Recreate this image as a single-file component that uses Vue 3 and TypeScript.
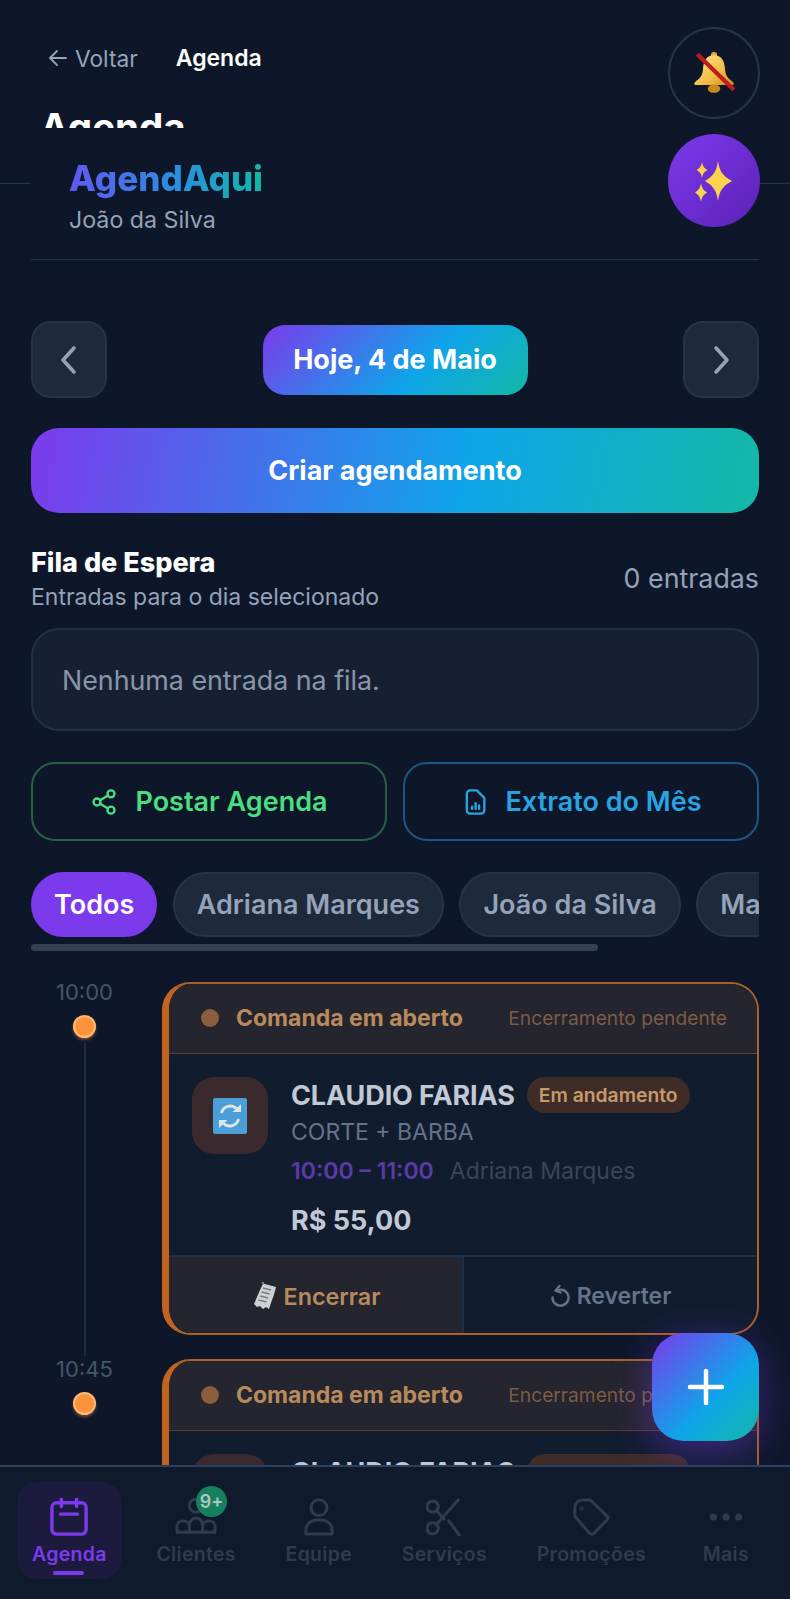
<script setup lang="ts">
import { ref } from 'vue';

interface Appointment {
  time: string;
  client: string;
  service: string;
  range: string;
  barber: string;
  price: string;
}

interface NavItem {
  label: string;
  icon: string;
  badge?: string;
}

const barbers = ref<string[]>(['Todos', 'Adriana Marques', 'João da Silva', 'Marcos Lima']);

const appointments = ref<Appointment[]>([
  { time: '10:00', client: 'CLAUDIO FARIAS', service: 'CORTE + BARBA', range: '10:00 – 11:00', barber: 'Adriana Marques', price: 'R$ 55,00' },
  { time: '10:45', client: 'CLAUDIO FARIAS', service: 'CORTE + BARBA', range: '10:45 – 11:45', barber: 'Adriana Marques', price: 'R$ 55,00' },
]);

const navItems = ref<NavItem[]>([
  { label: 'Agenda', icon: 'calendar' },
  { label: 'Clientes', icon: 'clients', badge: '9+' },
  { label: 'Equipe', icon: 'user' },
  { label: 'Serviços', icon: 'scissors' },
  { label: 'Promoções', icon: 'tag' },
  { label: 'Mais', icon: 'dots' },
]);
</script>

<template>
  <div class="page">

    <div class="crumbs">
      <div class="crumb-row">
        <span class="back">
          <svg width="22" height="22" viewBox="0 0 22 22" fill="none" stroke="currentColor" stroke-width="1.8" stroke-linecap="round" stroke-linejoin="round"><path d="M19 11H3M10 4l-7 7 7 7" /></svg>
          Voltar
        </span>
        <span class="crumb-current">Agenda</span>
      </div>
      <h1 class="page-title">Agenda</h1>
    </div>

    <div class="content">

      <!-- Brand -->
      <div class="brand">
        <div class="brand-name">AgendAqui</div>
        <div class="brand-user">João da Silva</div>
      </div>

      <!-- Date switcher -->
      <div class="date-row">
        <button class="date-arrow">
          <svg width="24" height="32" viewBox="0 0 24 32" fill="none" stroke="currentColor" stroke-width="3.6" stroke-linecap="round" stroke-linejoin="round"><path d="M17 4 6 16l11 12" /></svg>
        </button>
        <div class="date-pill">Hoje, 4 de Maio</div>
        <button class="date-arrow">
          <svg width="24" height="32" viewBox="0 0 24 32" fill="none" stroke="currentColor" stroke-width="3.6" stroke-linecap="round" stroke-linejoin="round"><path d="m7 4 11 12L7 28" /></svg>
        </button>
      </div>

      <button class="btn-create">Criar agendamento</button>

      <!-- Waiting list -->
      <div class="queue-head">
        <div>
          <div class="queue-title">Fila de Espera</div>
          <div class="queue-sub">Entradas para o dia selecionado</div>
        </div>
        <div class="queue-count">0 entradas</div>
      </div>
      <div class="queue-box">Nenhuma entrada na fila.</div>

      <!-- Actions -->
      <div class="action-row">
        <button class="btn-outline btn-green">
          <svg width="28" height="28" viewBox="0 0 24 24" fill="none" stroke="currentColor" stroke-width="2" stroke-linecap="round" stroke-linejoin="round">
            <circle cx="18" cy="5" r="3" /><circle cx="6" cy="12" r="3" /><circle cx="18" cy="19" r="3" />
            <path d="m8.6 13.5 6.8 4M15.4 6.5l-6.8 4" />
          </svg>
          Postar Agenda
        </button>
        <button class="btn-outline btn-blue">
          <svg width="28" height="28" viewBox="0 0 24 24" fill="none" stroke="currentColor" stroke-width="2" stroke-linecap="round" stroke-linejoin="round">
            <path d="M8 2h5.500L20 8.500V19a3 3 0 0 1-3 3H8a3 3 0 0 1-3-3V5a3 3 0 0 1 3-3Z" />
            <path d="M9.500 18v-2M12.500 18v-5M15.500 18v-3" />
          </svg>
          Extrato do Mês
        </button>
      </div>

      <!-- Barber filter -->
      <div class="tabs">
        <span v-for="(name, i) in barbers" :key="name" class="tab" :class="{ 'tab-active': i === 0 }">{{ name }}</span>
      </div>
      <div class="tabs-scroll"><div class="tabs-thumb"></div></div>

      <!-- Timeline -->
      <div class="timeline">
        <div v-for="(item, i) in appointments" :key="item.time" class="slot">
          <div class="slot-time">
            <span class="time-label">{{ item.time }}</span>
            <span class="time-dot"></span>
            <span v-if="i < appointments.length - 1" class="time-line"></span>
          </div>

          <div class="card">
            <div class="card-head">
              <span class="head-dot"></span>
              <span class="head-title">Comanda em aberto</span>
              <span class="head-note">Encerramento pendente</span>
            </div>

            <div class="card-body">
              <div class="avatar">
                <svg width="36" height="36" viewBox="0 0 36 36">
                  <rect x="1" y="0" width="34" height="36" rx="2" fill="#4a9fd8" />
                  <path d="M9.500 15a9 9 0 0 1 15-4.500M26.500 21a9 9 0 0 1-15 4.500" fill="none" stroke="#dfe6ea" stroke-width="3" />
                  <path d="M20.500 14H29V6ZM15.500 22H7v8Z" fill="#dfe6ea" />
                </svg>
              </div>
              <div class="info">
                <div class="name-row">
                  <span class="client">{{ item.client }}</span>
                  <span class="status">Em andamento</span>
                </div>
                <div class="service">{{ item.service }}</div>
                <div class="meta">
                  <span class="range">{{ item.range }}</span>
                  <span class="barber">{{ item.barber }}</span>
                </div>
                <div class="price">{{ item.price }}</div>
              </div>
            </div>

            <div class="card-actions">
              <button class="card-btn card-btn-close">
                <svg width="26" height="28" viewBox="0 0 26 28">
                  <path d="M10 1 25 5c-1 4-2 8-4 13-1 3-2 6-3 9l-3-2-3 2-3-3-3 1-3-3c3-6 5-13 10-22Z" fill="#cfd2d2" />
                  <path d="M12 6l8 2M10.500 10l8 2M9 14l8 2M7.500 18l8 2" stroke="#777d80" stroke-width="1.500" />
                </svg>
                Encerrar
              </button>
              <button class="card-btn card-btn-revert">
                <svg width="20" height="24" viewBox="0 0 20 24" fill="none" stroke="currentColor" stroke-width="2.400" stroke-linecap="round" stroke-linejoin="round">
                  <path d="M6 7a8 8 0 1 1-3.500 6.500" /><path d="M9.500 2 5.500 6.500l5 2" />
                </svg>
                Reverter
              </button>
            </div>
          </div>
        </div>
      </div>
    </div>

    <!-- Floating buttons -->
    <button class="float-round float-bell">
      <svg width="46" height="46" viewBox="0 0 44 44">
        <defs>
          <linearGradient id="bellGold" x1="0" y1="0" x2="1" y2="1">
            <stop offset="0" stop-color="#ffe58a" />
            <stop offset="0.6" stop-color="#f1bd45" />
            <stop offset="1" stop-color="#c98a1c" />
          </linearGradient>
        </defs>
        <circle cx="22" cy="5" r="3" fill="#e0ac3e" />
        <path d="M22 5c7 0 10 5 10.500 13 .4 7 3 9 8 13 .8 1 .3 2.500-1 2.500H4.500c-1.300 0-1.800-1.500-1-2.500 5-4 7.600-6 8-13C12 10 15 5 22 5Z" fill="url(#bellGold)" />
        <ellipse cx="22" cy="37" rx="6" ry="4" fill="#c98a1c" />
        <path d="M6 4 41 38" stroke="#c01c1c" stroke-width="4" />
      </svg>
    </button>
    <button class="float-round float-spark">
      <svg width="40" height="44" viewBox="0 0 40 44" fill="#fcd34d">
        <path d="M24 2c1.500 10 4.500 15 14 20-9.500 5-12.500 10-14 20-1.500-10-4.500-15-13-20 8.500-5 11.500-10 13-20Z" />
        <path d="M8 3c.7 4 2 6 5.500 8C10 13 8.700 15 8 19c-.7-4-2-6-5.500-8C6 9 7.300 7 8 3Z" />
        <path d="M7 24c.8 5 2.300 7 6 9.500-3.700 2.500-5.200 4.500-6 9.500-.8-5-2.300-7-6-9.500 3.700-2.500 5.200-4.500 6-9.500Z" />
      </svg>
    </button>
    <button class="fab">
      <svg width="40" height="40" viewBox="0 0 40 40" stroke="#fff" stroke-width="4.500" stroke-linecap="round"><path d="M20 4v32M4 20h32" /></svg>
    </button>

    <!-- Bottom navigation -->
    <nav class="nav">
      <div v-for="(item, i) in navItems" :key="item.label" class="nav-item" :class="{ 'nav-active': i === 0 }">
        <span class="nav-icon">
          <svg v-if="item.icon === 'calendar'" width="38" height="38" viewBox="0 0 40 40" fill="none" stroke="currentColor" stroke-width="3.600" stroke-linecap="round" stroke-linejoin="round">
            <rect x="2" y="5" width="36" height="33" rx="5" />
            <path d="M12 1v8M28 1v8M11 17h18" />
          </svg>
          <svg v-else-if="item.icon === 'clients'" width="42" height="38" viewBox="0 0 44 40" fill="none" stroke="currentColor" stroke-width="3" stroke-linecap="round" stroke-linejoin="round">
            <circle cx="22" cy="8" r="7" />
            <path d="M2 36v-6c0-4 3-6 6-6s6 2 7 4c1-5 4-7 7-7s6 2 7 7c1-2 4-4 7-4s6 2 6 6v6ZM15 28v8M29 28v8" />
          </svg>
          <svg v-else-if="item.icon === 'user'" width="30" height="38" viewBox="0 0 32 40" fill="none" stroke="currentColor" stroke-width="3.200" stroke-linecap="round" stroke-linejoin="round">
            <circle cx="16" cy="10" r="8.500" />
            <path d="M2 38v-4c0-7 6-11 14-11s14 4 14 11v4Z" />
          </svg>
          <svg v-else-if="item.icon === 'scissors'" width="36" height="38" viewBox="0 0 38 40" fill="none" stroke="currentColor" stroke-width="3.200" stroke-linecap="round" stroke-linejoin="round">
            <circle cx="7" cy="9" r="6" /><circle cx="7" cy="32" r="6" />
            <path d="M34 2 11 28M11 13l8 9M24 24l11 15" />
          </svg>
          <svg v-else-if="item.icon === 'tag'" width="38" height="38" viewBox="0 0 40 40" fill="none" stroke="currentColor" stroke-width="3.200" stroke-linecap="round" stroke-linejoin="round">
            <path d="M11 2h7a3 3 0 0 1 2.500 1.200L37 19a3 3 0 0 1 0 4L23 37a3 3 0 0 1-4.500 0L3.500 20A3 3 0 0 1 3 18v-8a8 8 0 0 1 8-8Z" />
            <circle cx="10" cy="11" r=".6" />
          </svg>
          <svg v-else width="36" height="10" viewBox="0 0 40 10" fill="currentColor">
            <circle cx="6" cy="5" r="4" /><circle cx="20" cy="5" r="4" /><circle cx="34" cy="5" r="4" />
          </svg>
          <span v-if="item.badge" class="nav-badge">{{ item.badge }}</span>
        </span>
        <span class="nav-label">{{ item.label }}</span>
        <span v-if="i === 0" class="nav-mark"></span>
      </div>
    </nav>

  </div>
</template>

<style>
html, body { margin: 0; background: #0e172a; }
</style>

<style scoped>
.page {
  position: relative;
  width: 790px;
  height: 1599px;
  overflow: hidden;
  background: #0e172a;
  font-family: Inter, "Liberation Sans", sans-serif;
  color: #fff;
}
button { font-family: inherit; cursor: pointer; padding: 0; }

.crumbs { height: 184px; box-sizing: border-box; padding: 40px 31px 0 47px; border-bottom: 1px solid #22344f; }
.crumb-row { display: flex; align-items: center; gap: 38px; height: 36px; font-size: 22.700px; }
.back { display: flex; align-items: center; gap: 6px; color: #94a3b8; }
.crumb-current { color: #fff; font-weight: 600; font-size: 23px; }
.page-title { margin: 28px 0 0 -7px; font-size: 38.500px; line-height: 46px; font-weight: 700; }

.content { padding: 0 31px; margin-top: -56px; position: relative; }

.brand { height: 132px; box-sizing: border-box; background: #0e172a; border-bottom: 1px solid #22344f; padding: 27px 0 0 38px; }
.brand-name {
  font-size: 35px;
  line-height: 46px;
  font-weight: 800;
  width: 196px;
  background: linear-gradient(90deg, #6456f0, #2a8fe0 55%, #14b8a6);
  -webkit-background-clip: text;
  background-clip: text;
  color: transparent;
}
.brand-user { font-size: 23.200px; line-height: 34px; color: #94a3b8; margin-top: 2px; }

.date-row { display: flex; align-items: center; justify-content: space-between; margin-top: 61px; }
.date-arrow {
  width: 76px;
  height: 77px;
  border: 2px solid #25344c;
  border-radius: 20px;
  background: #1e293b;
  color: #94a3b8;
  display: flex;
  align-items: center;
  justify-content: center;
}
.date-pill {
  width: 265px;
  height: 70px;
  border-radius: 22px;
  background: linear-gradient(135deg, #7c3aed, #0ea5e9 60%, #14b8a6);
  display: flex;
  align-items: center;
  justify-content: center;
  font-size: 27px;
  font-weight: 700;
}

.btn-create {
  display: block;
  width: 100%;
  height: 85px;
  margin-top: 30px;
  border: none;
  border-radius: 28px;
  background: linear-gradient(100deg, #7c3aed, #0ea5e9 60%, #14b8a6);
  color: #fff;
  font-size: 27px;
  font-weight: 700;
}

.queue-head { display: flex; justify-content: space-between; align-items: center; margin-top: 34px; }
.queue-title { font-size: 27px; line-height: 32px; font-weight: 800; }
.queue-sub { font-size: 23px; line-height: 34px; color: #94a3b8; margin-top: 1px; }
.queue-count { font-size: 26.800px; color: #94a3b8; margin-bottom: 5px; }

.queue-box {
  height: 103px;
  box-sizing: border-box;
  margin-top: 14px;
  padding-left: 29px;
  display: flex;
  align-items: center;
  border: 2px solid #22314a;
  border-radius: 28px;
  background: #172033;
  font-size: 26.800px;
  color: #8a96a8;
}

.action-row { display: grid; grid-template-columns: 1fr 1fr; gap: 16px; margin-top: 31px; }
.btn-outline {
  height: 79px;
  border-radius: 24px;
  background: transparent;
  display: flex;
  align-items: center;
  justify-content: center;
  gap: 17px;
  font-size: 27px;
  font-weight: 600;
}
.btn-green { border: 2px solid #266148; color: #4ade80; }
.btn-blue { border: 2px solid #1d5680; color: #29a3e2; }

.tabs { display: flex; gap: 15.500px; margin-top: 31px; overflow: hidden; }
.tab {
  flex-shrink: 0;
  height: 65px;
  box-sizing: border-box;
  padding: 0 22px;
  display: flex;
  align-items: center;
  border: 2px solid #25344c;
  border-radius: 33px;
  background: #1e293b;
  color: #94a3b8;
  font-size: 27px;
  font-weight: 600;
}
.tab-active { padding: 0 21px; background: #7c3aed; border-color: #7c3aed; color: #fff; }

.tabs-scroll { margin-top: 7px; height: 7px; }
.tabs-thumb { width: 567px; height: 7px; border-radius: 4px; background: #334155; }

/* cut where the bottom nav starts */
.timeline { display: flex; flex-direction: column; gap: 24px; margin-top: 28px; padding-top: 3px; height: 486px; box-sizing: border-box; overflow: hidden; }
.slot { display: flex; gap: 24px; flex-shrink: 0; }
.slot-time { width: 107px; flex-shrink: 0; display: flex; flex-direction: column; align-items: center; }
.time-label { font-size: 22px; line-height: 26px; margin-top: -3px; color: #475569; }
.time-dot {
  width: 23px;
  height: 23px;
  box-sizing: border-box;
  margin-top: 10px;
  border-radius: 50%;
  background: #fb923c;
  border: 2px solid #fdba74;
  box-shadow: 0 2px 3px rgba(251, 146, 60, 0.4);
}
.time-line { flex: 1; width: 2px; margin-top: 5px; margin-bottom: -21px; background: #1f2c41; }

.card {
  flex: 1;
  overflow: hidden;
  box-sizing: border-box;
  height: 353px;
  border: 2px solid #ab6029;
  border-left: 7px solid #c2641f;
  border-radius: 28px;
  background: #111c2f;
}
.card-head {
  height: 70px;
  box-sizing: border-box;
  display: flex;
  align-items: center;
  padding: 0 30px 2px 32px;
  background: #25252f;
  border-bottom: 1px solid #5e3d2c;
}
.head-dot { width: 18px; height: 18px; border-radius: 50%; background: #8a5d3c; margin-right: 17px; }
.head-title { font-size: 23px; font-weight: 700; color: #b98a5c; }
.head-note { margin-left: auto; font-size: 19.200px; color: #7d5c45; }

.card-body { display: flex; gap: 23px; height: 201px; box-sizing: border-box; padding: 23px 0 0 23px; }
.avatar {
  width: 76px;
  height: 77px;
  flex-shrink: 0;
  display: flex;
  align-items: center;
  justify-content: center;
  border-radius: 22px;
  background: #3a2a2d;
}
.name-row { display: flex; align-items: center; gap: 12px; height: 36px; }
.client { font-size: 27px; font-weight: 700; letter-spacing: -0.100px; color: #c2c9d5; }
.status { height: 36px; padding: 0 12px; display: flex; align-items: center; border-radius: 18px; background: #3f2c27; color: #c79a6b; font-size: 19.300px; font-weight: 600; }
.service { font-size: 23px; line-height: 32px; margin-top: 3px; color: #64748b; }
.meta { display: flex; gap: 16px; font-size: 23px; line-height: 32px; margin-top: 7px; }
.range { color: #5b3aa8; font-weight: 600; }
.barber { color: #3a4659; }
.price { font-size: 27px; font-weight: 700; line-height: 32px; margin-top: 18px; color: #c2c9d5; }

.card-actions { display: flex; height: 80px; border-top: 2px solid #1e3048; }
.card-btn {
  flex: 1;
  border: none;
  padding-bottom: 2px;
  display: flex;
  align-items: center;
  justify-content: center;
  gap: 7px;
  font-size: 23.300px;
  font-weight: 600;
  background: transparent;
}
.card-btn-close { background: #25252f; color: #b98a5c; border-right: 2px solid #1e3048; }
.card-btn-revert { color: #64748b; font-size: 23px; }

.float-round {
  position: absolute;
  left: 668px;
  width: 92px;
  height: 92px;
  border-radius: 50%;
  display: flex;
  align-items: center;
  justify-content: center;
}
.float-bell { top: 27px; background: #0e172a; border: 2px solid #25344c; }
.float-spark { top: 134px; height: 93px; border: none; background: linear-gradient(135deg, #7c3aed, #5b21b6); }

.fab {
  position: absolute;
  left: 652px;
  top: 1333px;
  width: 107px;
  height: 108px;
  border: none;
  border-radius: 32px;
  background: linear-gradient(135deg, #7c3aed, #0ea5e9 60%, #14b8a6);
  box-shadow: 0 10px 40px rgba(124, 58, 237, 0.45);
  display: flex;
  align-items: center;
  justify-content: center;
}

.nav {
  position: absolute;
  left: 0;
  right: 0;
  bottom: 0;
  height: 134px;
  box-sizing: border-box;
  padding: 15px 26px 0 17px;
  display: flex;
  justify-content: space-between;
  align-items: flex-start;
  background: #0f1a2c;
  border-top: 2px solid #2b4160;
  color: #2f3c50;
}
.nav-item {
  position: relative;
  height: 97px;
  box-sizing: border-box;
  padding: 16px 15px 0;
  display: flex;
  flex-direction: column;
  align-items: center;
  border-radius: 20px;
}
.nav-item:last-child { margin-left: 7px; }
.nav-active { background: #1c1a3d; color: #7c3aed; }
.nav-icon { position: relative; height: 38px; display: flex; align-items: center; justify-content: center; }
.nav-label { font-size: 19.500px; font-weight: 600; line-height: 26px; margin-top: 5px; letter-spacing: 0.3px; }
.nav-mark { position: absolute; left: 36px; bottom: 4px; width: 31px; height: 4px; border-radius: 2px; background: #7c3aed; }
.nav-badge {
  position: absolute;
  left: 21px;
  top: -12px;
  width: 31px;
  height: 31px;
  border-radius: 50%;
  display: flex;
  align-items: center;
  justify-content: center;
  background: #14805e;
  color: #b0c4c0;
  font-size: 18px;
  font-weight: 600;
}
</style>
